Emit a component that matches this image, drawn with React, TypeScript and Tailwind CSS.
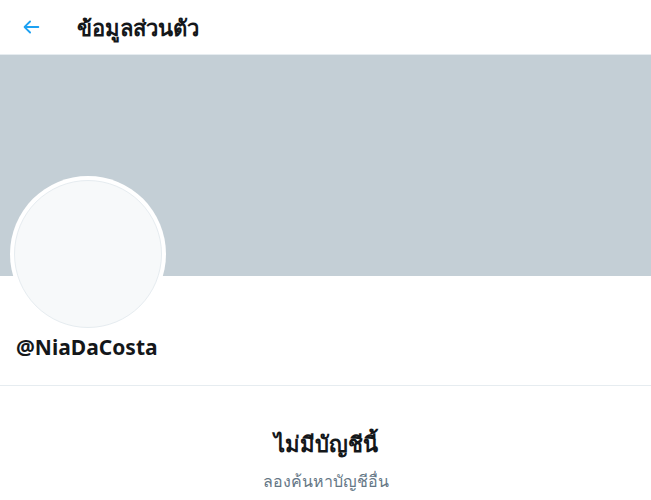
const font = { fontFamily: '"Noto Sans", "DejaVu Sans", sans-serif' };

function BackArrow() {
  return (
    <svg viewBox="0 0 24 24" className="h-[22px] w-[22px] fill-[#1da1f2]">
      <path d="M20 11H7.414l4.293-4.293a1 1 0 0 0-1.414-1.414l-6 6a1 1 0 0 0 0 1.414l6 6a.996.996 0 0 0 1.414 0 1 1 0 0 0 0-1.414L7.414 13H20a1 1 0 1 0 0-2z" />
    </svg>
  );
}

export default function App() {
  return (
    <div className="min-h-[500px] w-[651px] bg-white text-[#14171a]" style={font}>
      <header className="flex h-[55px] items-center border-b border-[#e6ecf0] px-5">
        <div className="flex w-[57px] items-center">
          <BackArrow />
        </div>
        <h1 className="text-[22px] font-bold leading-6">ข้อมูลส่วนตัว</h1>
      </header>

      <div className="h-[221px] bg-[#c4cfd6]" />

      <div className="px-4">
        <div className="-mt-[100px] mb-[3px] h-[156px] w-[156px] rounded-full bg-white p-[4px] -ml-[6px]">
          <div className="h-full w-full rounded-full border border-[#e6ecf0] bg-[#f7f9fa]" />
        </div>
        <p className="pb-[26px] text-[21px] font-bold leading-6">@NiaDaCosta</p>
      </div>

      <div className="border-t border-[#e6ecf0]" />

      <div className="flex flex-col items-center pt-[43px]">
        <h2 className="text-[22px] font-bold leading-7">ไม่มีบัญชีนี้</h2>
        <p className="mt-[14px] text-[16px] leading-5 text-[#657786]">ลองค้นหาบัญชีอื่น</p>
      </div>
    </div>
  );
}
